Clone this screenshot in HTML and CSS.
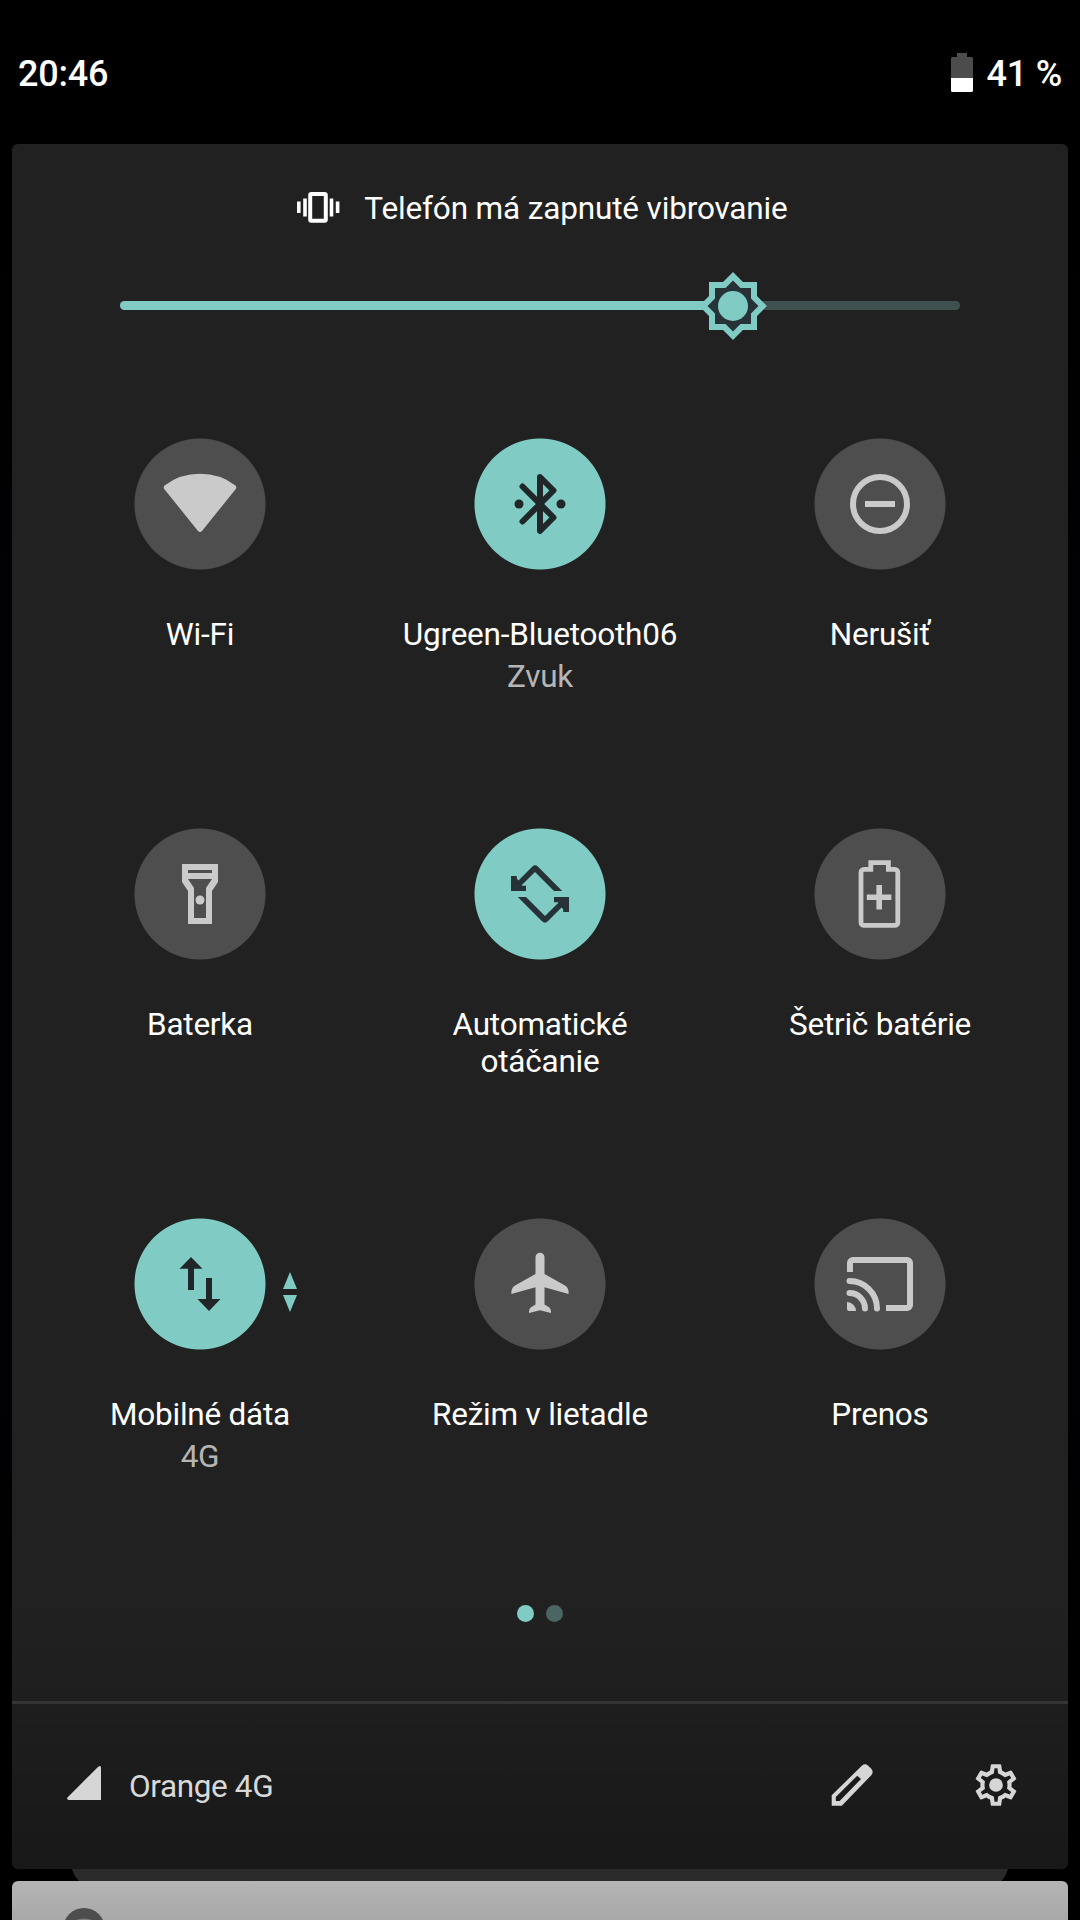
FILE: index.html
```html
<!DOCTYPE html>
<html lang="sk">
<head>
<meta charset="utf-8">
<title>Rýchle nastavenia</title>
<link rel="stylesheet" href="styles.css">
</head>
<body>
<header class="status">
  <span class="clock">20:46</span>
  <span class="battery">
    <svg class="battery-icon" width="22" height="39" viewBox="0 0 22 39"><path fill="#4c4c4c" d="M6 0h10v4h4.500a1.500 1.500 0 0 1 1.500 1.500V25H0V5.500A1.500 1.500 0 0 1 1.500 4H6z"/><path fill="#fff" d="M0 25h22v12.500a1.500 1.500 0 0 1-1.500 1.500h-19A1.500 1.500 0 0 1 0 37.500z"/></svg>
    <span class="percent">41 %</span>
  </span>
</header>

<main class="panel">
  <div class="ringer">
    <svg width="43" height="31" viewBox="0 0 43 31" fill="#fff"><path d="M0 9.500h3.600v11.500H0zM6.200 6.500h3.600v18H6.200zM32.700 6.500h3.600v18h-3.600zM38.800 9.500h3.600v11.500h-3.600z"/><rect x="13.200" y="2" width="15.600" height="26.700" rx="1.200" fill="none" stroke="#fff" stroke-width="4"/></svg>
    <span>Telefón má zapnuté vibrovanie</span>
  </div>

  <div class="slider">
    <div class="track"><div class="level"></div></div>
    <svg class="thumb" viewBox="0 0 24 24"><path fill="#80cbc4" d="M20 8.690V4h-4.690L12 .690 8.690 4H4v4.690L.690 12 4 15.310V20h4.690L12 23.310 15.310 20H20v-4.690L23.310 12z"/><path fill="#263238" d="M18 9.520V6h-3.520L12 3.520 9.520 6H6v3.520L3.520 12 6 14.480V18h3.520L12 20.480 14.480 18H18v-3.520L20.480 12z"/><circle cx="12" cy="12" r="5" fill="#80cbc4"/></svg>
  </div>

  <section class="tiles">
    <div class="tile">
      <div class="disc"><svg class="icon" viewBox="0 0 72 72"><path d="M1 17.200Q16 5.800 36 5.800T71 17.200Q73.200 19 71.600 21.200L38 63Q36 65 34 63L.400 21.200Q-1.200 19 1 17.200z"/></svg></div>
      <div class="label">Wi-Fi</div>
    </div>
    <div class="tile">
      <div class="disc on"><svg class="icon" viewBox="0 0 72 72"><path fill="none" stroke="currentColor" stroke-width="6" stroke-linecap="round" stroke-linejoin="round" d="M18.500 18.500L49.500 49.500 36 63V9l13.500 13.500L18.500 53.500"/><circle cx="15" cy="36" r="4.500"/><circle cx="57" cy="36" r="4.500"/></svg></div>
      <div class="label">Ugreen-Bluetooth06</div>
      <div class="sub">Zvuk</div>
    </div>
    <div class="tile">
      <div class="disc"><svg class="icon" viewBox="0 0 72 72"><circle cx="36" cy="36" r="27" fill="none" stroke="currentColor" stroke-width="6"/><path d="M21 33h30v6H21z"/></svg></div>
      <div class="label">Nerušiť</div>
    </div>
    <div class="tile">
      <div class="disc"><svg class="icon" viewBox="0 0 72 72"><path fill-rule="evenodd" d="M18 6h36v18l-6 9v33H24V33l-6-9zM24 12v3h24v-3zM24 21l6 9v30h12V30l6-9z"/><circle cx="36" cy="42" r="4.500"/></svg></div>
      <div class="label">Baterka</div>
    </div>
    <div class="tile">
      <div class="disc on slate"><svg class="icon" viewBox="0 0 72 72"><path d="M58.200 33L34 8.700Q31 5.900 28.200 8.700L14.500 22.400 12.800 20.700V18H7v15h15v-5.200h-3.800L17.600 27.200 31 14 50 33z"/><path transform="rotate(180 36 36)" d="M58.200 33L34 8.700Q31 5.900 28.200 8.700L14.500 22.400 12.800 20.700V18H7v15h15v-5.200h-3.800L17.600 27.200 31 14 50 33z"/></svg></div>
      <div class="label">Automatické<br>otáčanie</div>
    </div>
    <div class="tile">
      <div class="disc"><svg class="icon" viewBox="0 0 72 72"><path fill="none" stroke="currentColor" stroke-width="4.800" d="M20 11.400h6.800V4.600h17.600v6.800h6.400a3 3 0 0 1 3 3v50a3 3 0 0 1-3 3H20a3 3 0 0 1-3-3v-50a3 3 0 0 1 3-3z"/><path d="M32.400 27h5.600v9.500h9.400v5.600H38v9.400h-5.600v-9.400h-9.600v-5.600h9.600z"/></svg></div>
      <div class="label">Šetrič batérie</div>
    </div>
    <div class="tile">
      <div class="disc on"><svg class="icon" viewBox="0 0 72 72"><path d="M27 9l11.500 11.800H30V42h-6V20.800h-8.500zM45 63l11.500-12H48V30h-6v21h-8.500z"/></svg>
        <svg class="activity" width="14" height="40" viewBox="0 0 14 40"><path fill="#80cbc4" d="M7 0l7 17H0zM7 40l7-17H0z"/></svg></div>
      <div class="label">Mobilné dáta</div>
      <div class="sub">4G</div>
    </div>
    <div class="tile">
      <div class="disc"><svg class="icon" viewBox="0 0 72 72"><path d="M36 4.700a4.500 4.500 0 0 1 4.500 4.500V26L61 37.500Q65 40 64.600 46L40.500 39.300V56.500L45 59.200Q47.500 61 47 65L36 62.300 25 65Q24.500 61 27 59.200L31.500 56.500V39.300L7.400 46Q7 40 11 37.500L31.500 26V9.200A4.500 4.500 0 0 1 36 4.700z"/></svg></div>
      <div class="label">Režim v lietadle</div>
    </div>
    <div class="tile">
      <div class="disc"><svg class="icon" viewBox="0 0 72 72"><g fill="none" stroke="currentColor" stroke-width="6"><path d="M6 24V15a3 3 0 0 1 3-3h54a3 3 0 0 1 3 3v42a3 3 0 0 1-3 3H42"/><path stroke-linecap="round" d="M5.500 45A15.500 15.500 0 0 1 21 60.500M5.500 33A27.500 27.500 0 0 1 33 60.500"/></g><path d="M3 54a9 9 0 0 1 9 9H5a2 2 0 0 1-2-2z"/></svg></div>
      <div class="label">Prenos</div>
    </div>
  </section>

  <div class="pages"><i class="dot current"></i><i class="dot"></i></div>

  <footer class="footer">
    <svg class="signal" width="34" height="34" viewBox="0 0 34 34"><path d="M31.200.700Q34-1 34 2v32H2Q-1 34 .700 31.200z"/></svg>
    <span class="carrier">Orange 4G</span>
    <svg class="edit" width="42" height="42" viewBox="0 0 42 42"><path fill-rule="evenodd" d="M.700 41.700V31.300L30.800 1.700Q34-1 37.200 1.700L40.300 4.800Q43 8 40.300 11.200L10.800 41.700zM4.800 33V37h3.800L30 15 26.300 11.700z"/></svg>
    <svg class="gear" width="50" height="50" viewBox="0 0 24 24"><path fill-rule="evenodd" d="M19.430 12.980c.04-.32.07-.64.07-.98 0-.34-.03-.66-.07-.98l2.110-1.650c.19-.15.24-.42.12-.64l-2-3.460c-.09-.16-.26-.25-.44-.25-.06 0-.12.010-.17.030l-2.490 1c-.52-.4-1.080-.73-1.690-.98l-.38-2.650C14.460 2.180 14.250 2 14 2h-4c-.25 0-.46.18-.49.42l-.38 2.650c-.61.25-1.170.59-1.690.98l-2.490-1c-.06-.02-.12-.03-.18-.03-.17 0-.34.09-.43.25l-2 3.460c-.13.22-.07.49.12.64l2.110 1.650c-.04.32-.07.65-.07.98 0 .33.03.66.07.98l-2.110 1.650c-.19.15-.24.42-.12.64l2 3.460c.09.16.26.25.44.25.06 0 .12-.01.17-.03l2.490-1c.52.4 1.080.73 1.690.98l.38 2.650c.03.24.24.42.49.42h4c.25 0 .46-.18.49-.42l.38-2.650c.61-.25 1.170-.59 1.690-.98l2.490 1c.06.02.12.03.18.03.17 0 .34-.09.43-.25l2-3.460c.12-.22.07-.49-.12-.64zM17.450 11.270c.04.31.05.52.05.73 0 .21-.02.43-.05.73l-.14 1.130.89.7 1.080.84-.7 1.210-1.270-.51-1.040-.42-.9.68c-.43.32-.84.56-1.250.73l-1.060.43-.16 1.130-.2 1.350h-1.400l-.19-1.350-.16-1.130-1.060-.43c-.43-.18-.83-.41-1.230-.71l-.91-.7-1.060.43-1.270.51-.7-1.210 1.080-.84.89-.7-.14-1.130c-.03-.31-.05-.54-.05-.74s.02-.43.05-.73l.14-1.130-.89-.7-1.080-.84.7-1.210 1.270.51 1.040.42.9-.68c.43-.32.84-.56 1.250-.73l1.060-.43.16-1.130.2-1.350h1.390l.19 1.350.16 1.130 1.060.43c.43.18.83.41 1.230.71l.91.7 1.060-.43 1.270-.51.7 1.210-1.070.85-.89.7z"/><circle cx="12" cy="12" r="3.300"/></svg>
  </footer>
</main>

<svg class="shelf" width="1080" height="12" viewBox="0 0 1080 12"><path fill="#2a2a2a" d="M72 0h936q-2 7-6.500 12H79Q74 7 72 0z"/></svg>
<article class="notification">
  <svg width="42" height="42" viewBox="0 0 42 42"><circle cx="21" cy="21" r="21" fill="#4d4d4d"/><path fill="none" stroke="#7c7c7c" stroke-width="2" d="M12 13.500Q21 9.500 30 13.500"/></svg>
</article>
</body>
</html>
```
FILE: styles.css
```css
* { box-sizing: border-box; }

body {
  margin: 0;
  width: 1080px;
  height: 1920px;
  overflow: hidden;
  background: linear-gradient(#000 200px, #020205 700px, #020205 1300px, #000 1700px);
  color: #fff;
  font: 31.5px/37px Roboto, sans-serif;
  letter-spacing: -0.22px;
}

svg { display: block; flex: none; }

.status {
  height: 144px;
  padding: 4px 18px 0;
  display: flex;
  justify-content: space-between;
  align-items: center;
  font-size: 36px;
  line-height: 42px;
  font-weight: 500;
}
.battery { display: flex; align-items: center; gap: 14px; }
.battery-icon { margin-top: -4px; }

.panel {
  height: 1725px;
  margin: 0 12px;
  padding-top: 46px;
  border-radius: 6px;
  background: linear-gradient(#212121 1450px, #1e1e1e 1558px, #181818);
  display: flex;
  flex-direction: column;
}

.ringer {
  display: flex;
  justify-content: center;
  gap: 24px;
  height: 37px;
  padding-left: 5px;
  letter-spacing: -0.15px;
}
.ringer svg { margin-top: 2px; }

.slider { position: relative; height: 72px; margin: 43px 108px 0; padding-top: 31px; }
.track { height: 9px; border-radius: 5px; background: #3f514f; overflow: hidden; }
.level { width: 613px; height: 100%; background: #80cbc4; }
.thumb { position: absolute; left: 577px; top: 0; width: 72px; height: 72px; }

.tiles {
  display: grid;
  grid-template-columns: repeat(3, 340px);
  grid-template-rows: 390px 390px 340px;
  justify-content: center;
  margin-top: 96px;
}
.tile { display: flex; flex-direction: column; align-items: center; text-align: center; }
.disc {
  --fill: #4e4e4e;
  position: relative;
  width: 132px;
  height: 132px;
  background: radial-gradient(circle, var(--fill) 65px, transparent 66px);
  color: #cacaca;
  display: flex;
  align-items: center;
  justify-content: center;
}
.disc.on { --fill: #80cbc4; color: #212729; }
.disc.slate { color: #263238; }
.icon { width: 72px; height: 72px; fill: currentColor; overflow: visible; }
.activity { position: absolute; left: 149px; top: 54px; }
.label { margin-top: 46px; }
.sub { margin-top: 5px; color: #b5b5b5; }

.pages { display: flex; justify-content: center; gap: 12px; margin-top: 47px; }
.dot { width: 17px; height: 17px; border-radius: 50%; background: #4a6562; }
.dot.current { background: #80cbc4; }

.footer {
  height: 168px;
  margin-top: auto;
  padding: 0 47px 4px 55px;
  border-top: 3px solid #343434;
  display: flex;
  align-items: center;
  color: #d8d8d8;
  fill: #d6d6d6;
}
.signal { margin-top: -4px; }
.carrier { margin: 3px auto 0 28px; letter-spacing: -0.38px; }
.edit { margin-right: 98px; }

.notification {
  height: 39px;
  margin: 0 12px;
  padding: 27px 0 0 51px;
  overflow: hidden;
  border-radius: 6px 6px 0 0;
  background: linear-gradient(#b5b5b5, #a8a8a8);
}
```
